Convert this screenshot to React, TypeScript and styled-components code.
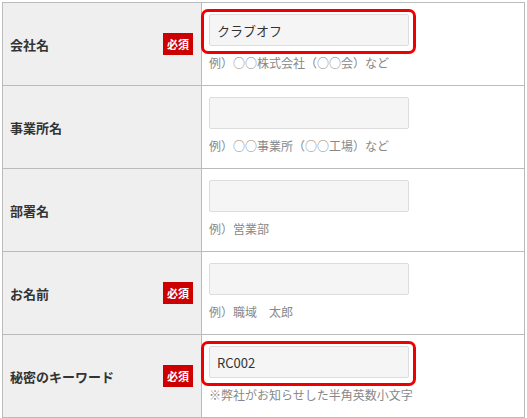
import React from "react";
import styled, { createGlobalStyle } from "styled-components";

const GlobalStyle = createGlobalStyle`
  html, body {
    margin: 0;
    padding: 0;
    background: #ffffff;
  }
  body {
    font-family: "Noto Sans CJK JP", "Noto Sans", sans-serif;
    color: #333333;
  }
`;

type Field = {
  label: string;
  required?: boolean;
  value?: string;
  hint: string;
  highlight?: boolean;
};

const fields: Field[] = [
  { label: "会社名", required: true, value: "クラブオフ", hint: "例）○○株式会社（○○会）など", highlight: true },
  { label: "事業所名", hint: "例）○○事業所（○○工場）など" },
  { label: "部署名", hint: "例）営業部" },
  { label: "お名前", required: true, hint: "例）職域　太郎" },
  { label: "秘密のキーワード", required: true, value: "RC002", hint: "※弊社がお知らせした半角英数小文字", highlight: true },
];

const App = () => {
  return (
    <>
      <GlobalStyle />
      <Page>
        <FormTable>
          <tbody>
            {fields.map((f) => (
              <Row key={f.label}>
                <LabelCell>
                  <LabelInner>
                    <LabelText>{f.label}</LabelText>
                    {f.required && <Badge>必須</Badge>}
                  </LabelInner>
                </LabelCell>
                <InputCell>
                  <InputWrap>
                    <TextInput type="text" defaultValue={f.value ?? ""} readOnly />
                    {f.highlight && <Highlight />}
                  </InputWrap>
                  <Hint>{f.hint}</Hint>
                </InputCell>
              </Row>
            ))}
          </tbody>
        </FormTable>
      </Page>
    </>
  );
};

export default App;

const Page = styled.div`
  padding: 2px 0 0 2px;
`;

const FormTable = styled.table`
  width: 523px;
  border-collapse: collapse;
  table-layout: fixed;
  border: 1px solid #bbbbbb;
`;

const Row = styled.tr`
  height: 83px;
  border-bottom: 1px solid #bbbbbb;
`;

const LabelCell = styled.th`
  width: 183px;
  padding: 0 8px 0 7px;
  background: #efefef;
  border-right: 1px solid #bbbbbb;
  text-align: left;
  vertical-align: middle;
`;

const LabelInner = styled.div`
  display: flex;
  align-items: center;
  justify-content: space-between;
`;

const LabelText = styled.span`
  font-size: 13px;
  font-weight: 700;
  color: #333333;
`;

const Badge = styled.span`
  display: inline-flex;
  align-items: center;
  justify-content: center;
  width: 30px;
  height: 22px;
  background: #cc0000;
  color: #ffffff;
  font-size: 11px;
  font-weight: 700;
`;

const InputCell = styled.td`
  padding: 11px 7px 13px 7px;
  vertical-align: top;
  background: #ffffff;
`;

const InputWrap = styled.div`
  position: relative;
  width: 200px;
  height: 32px;
`;

const TextInput = styled.input`
  box-sizing: border-box;
  width: 200px;
  height: 32px;
  margin: 0;
  padding: 0 7px;
  background: #f5f5f5;
  border: 1px solid #dddddd;
  border-radius: 2px;
  font-family: "Noto Sans CJK JP", "Noto Sans", sans-serif;
  font-size: 13px;
  color: #333333;
  outline: none;
`;

const Highlight = styled.div`
  position: absolute;
  left: -8px;
  top: -5px;
  width: 215px;
  height: 45px;
  box-sizing: border-box;
  border: 3px solid #ee0000;
  border-radius: 7px;
  pointer-events: none;
`;

const Hint = styled.div`
  margin-top: 8px;
  font-size: 12px;
  line-height: 18px;
  color: #888888;
`;
